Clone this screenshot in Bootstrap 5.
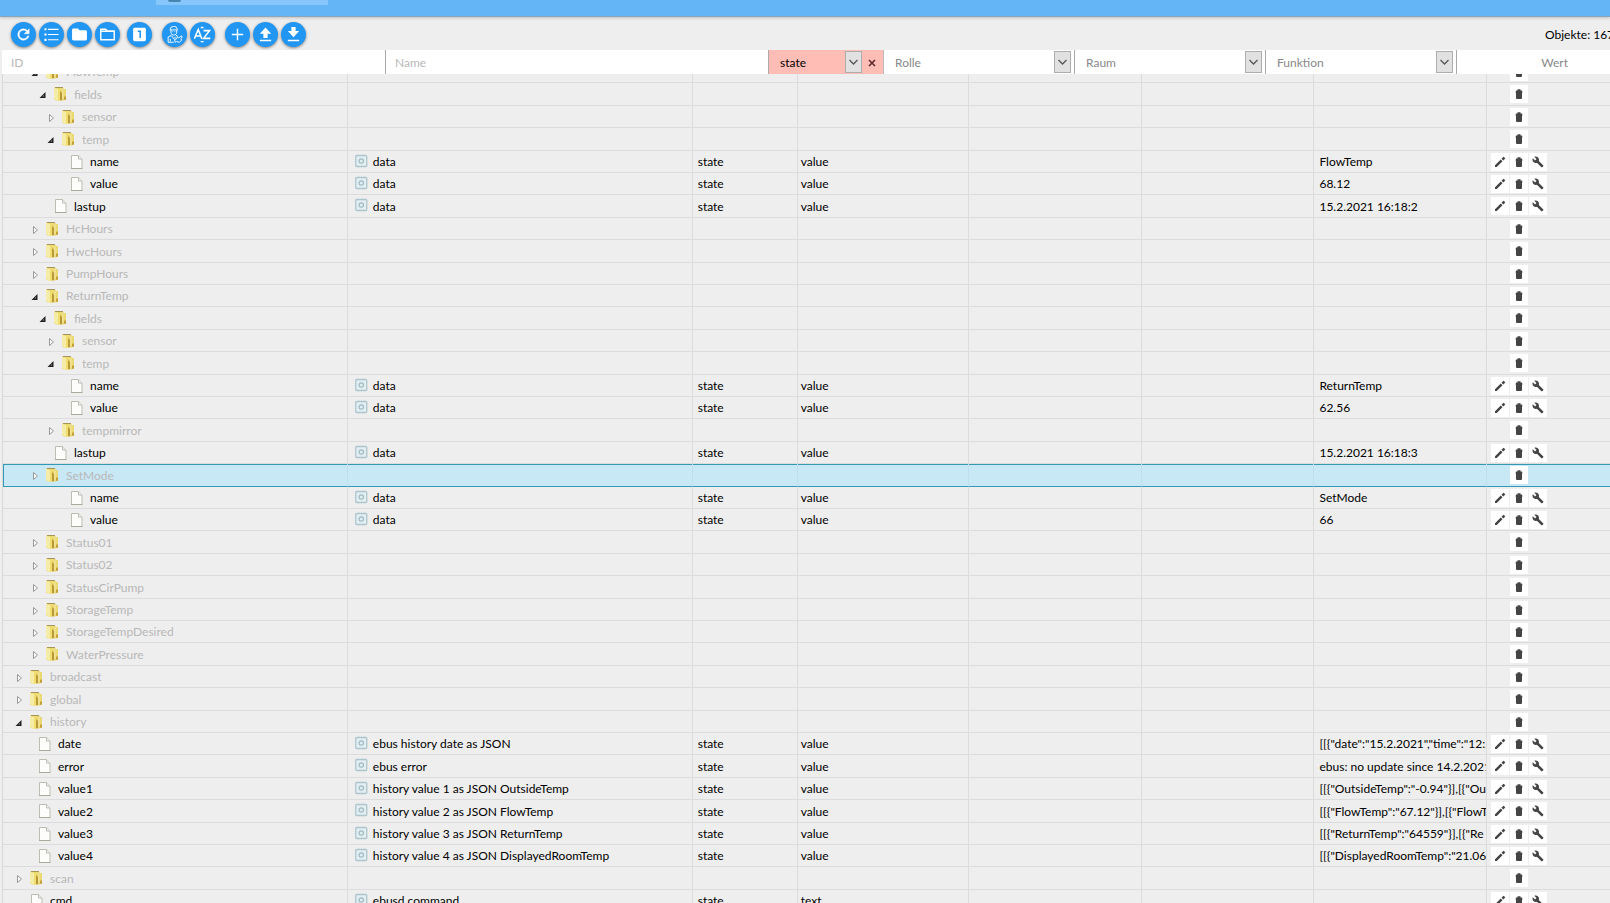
<!DOCTYPE html>
<html lang="de">
<head>
<meta charset="utf-8">
<meta name="viewport" content="width=device-width, initial-scale=1">
<title>Objekte</title>
<link href="https://cdn.jsdelivr.net/npm/bootstrap@5.3.0/dist/css/bootstrap.min.css" rel="stylesheet">
<style>
  body { background: #eee; color: #000; font: 12px/18px Lato, "Open Sans", sans-serif; }
  .appbar { height: 17px; background: #64b5f6; border-bottom: 1px solid #8aa4b8; box-shadow: 0 1px 3px #0003; }
  .appbar-tab { width: 172px; height: 5px; margin-left: 156px; padding-left: 12px; background: #86c6fa; }
  .appbar-dot { width: 13px; height: 2px; background: #4784b0; border-radius: 0 0 6px 6px; }
  .tools { height: 33px; padding: 5px 0 0 11px; gap: 3px; }
  .tool { width: 25px; height: 25px; border: 0; border-radius: 50%; background: #2196f3; box-shadow: 0 1px 3px #0007; }
  .tool svg { width: 17px; height: 17px; }
  .tool.apart { margin-left: 4px; }
  .tool.far { margin-left: 7px; }
  .count { width: 65px; white-space: nowrap; }
  .filters { display: grid; grid-template-columns: 384fr 383fr 115fr 191fr 191fr 191fr 153fr; height: 24px; margin-left: 2px; background: #fff; color: #888; }
  .filters > * { border-right: 1px solid #aaa; min-width: 0; }
  .filters > :last-child { border: 0; }
  .filters input, .filters select { width: 100%; height: 24px; border: 0; padding: 2px 8px 0; background: transparent; color: inherit; outline: 0; appearance: none; }
  .filters input { padding: 0 9px; }
  .filters input::placeholder { color: #b8b8b8; opacity: 1; }
  .filters .chosen { background: #ffbdb5; color: #000; border-right: 1px solid #bbb; }
  .pick { display: grid; grid-template-columns: 1fr auto; align-items: center; }
  .pick select { grid-area: 1 / 1 / 2 / 3; padding-left: 11px; }
  .drop { grid-area: 1 / 2; width: 17px; height: 22px; margin-right: 3px; background: #e1e1e1; border: 1px solid #adadad; pointer-events: none; }
  .pick .clear { width: 21px; border: 0; padding: 0 2px 0 0; background: none; grid-area: 1 / 3; line-height: 1; }
  .chosen .drop { margin-right: 0; }
  .chosen.pick { grid-template-columns: 1fr auto auto; }
  .value-head { padding: 2px 42px 0 0; }
  .tree { table-layout: fixed; width: calc(100% - 2px); margin: -13px 0 0 2px; border-collapse: separate; border-spacing: 0; border-left: 1px solid #d8d8d8; }
  .tree td { height: 22px; padding: 0 0 0 5px; border: solid #dcdcdc; border-width: 0 1px 1px 0; overflow: hidden; white-space: nowrap; line-height: 18px; }
  .tree tr:nth-child(5n+2) td, .tree tr:nth-child(5n+4) td { height: 23px; }
  .tree td:last-child { border-right: 0; padding-left: 4px; }
  .tree td:nth-child(2) { padding-left: 7px; }
  .tree td:nth-child(4) { padding-left: 3px; }
  .tree .cell-text { padding-top: 1px; }
  .branch { color: #b8b8b8; }
  .tree .active td { background: #c9e8f6; border-bottom-color: #3399b5; border-right-color: #c0dfed; box-shadow: inset 0 1px #3399b5; }
  .tree .active td:first-child { box-shadow: inset 1px 1px #3399b5; }
  .twig, .glyph { width: 20px; height: 18px; flex: none; }
  .kind { width: 18px; height: 18px; flex: none; }
  .acts { gap: 1px; }
  .act { width: 18px; height: 18px; border: 0; padding: 0; background: #fff; display: flex; align-items: center; justify-content: center; }
  .act svg { width: 12px; height: 12px; }
</style>
</head>
<body class="overflow-hidden">
<svg class="d-none" aria-hidden="true">
  <symbol id="i-folder" viewBox="1 0 20 18"><path d="M1 2.500h9l1 1.500h2v10.500l-2.500 1H3l-2-1z" fill="#ead873"/><path d="M1 3l4 1v12l-4-2z" fill="#f6ecaa"/><path d="M5 4l2-1v12l-2 1z" fill="#f0dd6c"/><path d="M7 6l2 2v7l-2 .5z" fill="#b8993c"/><path d="M9 4h2v9l-2 1z" fill="#f0e08a"/><path d="M11 11.500h2v3l-2 .5z" fill="#c4a136"/><path d="M2 2.500h8" stroke="#a8955c"/></symbol>
  <symbol id="i-file" viewBox="0 0 20 18"><path d="M1.500 2.500h7l3.500 3.500v9.500H1.500z" fill="#fdfdfb" stroke="#bdbdb4"/><path d="M8.500 2.500V6H12" fill="#eee" stroke="#bdbdb4"/><path d="M1 15.500h11.500" stroke="#aaa99a"/></symbol>
  <symbol id="i-open" viewBox="0 0 20 18"><path d="M11.500 7v6H5.500z" fill="#222"/><path d="M10 10v1.500H8.500z" fill="#999"/></symbol>
  <symbol id="i-shut" viewBox="0 0 20 18"><path d="M7.500 6.500l4 3.500-4 3.500z" fill="#fafafa" stroke="#999"/></symbol>
  <symbol id="i-state" viewBox="0 0 18 18"><rect x=".75" y="2.500" width="11" height="11" rx="1" fill="#e4edf0" stroke="#adc6ce" stroke-width="1.300"/><circle cx="6.250" cy="8" r="2.200" fill="none" stroke="#9dbbc5" stroke-width="1.200"/></symbol>
  <symbol id="i-pen" viewBox="0 0 24 24"><path d="M2 18.500V22h3.500L17 10.500 13.500 7zM22 5.500a1 1 0 0 0 0-1.400L19.900 2a1 1 0 0 0-1.400 0L15 5.500 18.500 9z" fill="#444"/></symbol>
  <symbol id="i-bin" viewBox="0 0 24 24"><path d="M6 5h3V2.500h6V5h3v2h1v2h-1v11a2 2 0 0 1-2 2H8a2 2 0 0 1-2-2V9H5V7h1z" fill="#444"/></symbol>
  <symbol id="i-wrench" viewBox="0 0 24 24"><path d="M22.700 19l-9.100-9.100c.9-2.300.4-5-1.500-6.900-2-2-5-2.400-7.400-1.300L9 6 6 9 1.600 4.700C.4 7.100.9 10.100 2.900 12.100c1.900 1.900 4.600 2.400 6.900 1.500l9.100 9.100c.4.4 1 .4 1.400 0l2.300-2.300c.5-.4.5-1.100.1-1.400z" fill="#444"/></symbol>
  <symbol id="i-chev" viewBox="0 0 15 20"><path d="M3.500 8l4 4 4-4" fill="none" stroke="#555" stroke-width="1.300"/></symbol>
</svg>

<div class="d-flex flex-column vh-100">
  <header class="appbar flex-shrink-0"><div class="appbar-tab"><div class="appbar-dot"></div></div></header>

  <div class="tools d-flex align-items-start flex-shrink-0">
    <button class="tool d-flex p-0 align-items-center justify-content-center" aria-label="Aktualisieren"><svg viewBox="0 0 24 24" fill="#fff" stroke="#fff" stroke-width=".6"><path d="M17.650 6.350A8 8 0 1 0 19.730 14h-2.080A6 6 0 1 1 12 6c1.660 0 3.140.69 4.220 1.780L13 11h7V4z"/></svg></button>
    <button class="tool d-flex p-0 align-items-center justify-content-center" aria-label="Liste"><svg viewBox="0 0 24 24" fill="#fff"><path d="M2 3h3v3H2zM2 10.500h3v3H2zM2 18h3v3H2zM7 4h15v1.500H7zM7 11.300h15v1.500H7zM7 18.700h15v1.500H7z"/></svg></button>
    <button class="tool d-flex p-0 align-items-center justify-content-center" aria-label="Alle zuklappen"><svg viewBox="0 0 24 24" fill="#fff"><path d="M10 3.500H3.500a2 2 0 0 0-2 2v13a2 2 0 0 0 2 2h17a2 2 0 0 0 2-2V8a2 2 0 0 0-2-2H12z"/></svg></button>
    <button class="tool d-flex p-0 align-items-center justify-content-center" aria-label="Alle aufklappen"><svg viewBox="0 0 24 24" fill="none" stroke="#fff" stroke-width="2"><path d="M2.500 19.500v-15h7l2 2.500h10v12.500zM2.500 7.500h19"/></svg></button>
    <button class="tool apart d-flex p-0 align-items-center justify-content-center" aria-label="Eine Ebene"><svg viewBox="0 0 24 24"><rect x="3" y="2.500" width="18" height="19" rx="2" fill="#fff"/><path d="M9.500 7.500h3.500v9.500" fill="none" stroke="#2196f3" stroke-width="2.200"/></svg></button>
    <button class="tool far d-flex p-0 align-items-center justify-content-center" aria-label="Expertenmodus"><svg viewBox="0 0 24 24" fill="none" stroke="#fff" stroke-width="1.300"><path d="M6 5a5 4.500 0 0 1 10 0M5 5.500h12M7 6v3c0 5 8 5 8 0V6M9 8h1M12 8h1M8 13l-5 2.500V23h8M14 13l2 1M8 14l3 4 3-3M6 18v4M13 23l-1-4 3-1 1-3 2 2 3-3 2 1-2 3 1 2-3 3-4-1z"/></svg></button>
    <button class="tool d-flex p-0 align-items-center justify-content-center" aria-label="Sortieren"><svg viewBox="0 0 24 24" fill="none" stroke="#fff" stroke-width="2.200"><path d="M.5 18L6 5l5 13M2.500 14h7M13.500 6.500H22L13.500 17.500H23"/><path d="M8.500 3l3-2.500 3 2.500zM8.500 21l3 2.500 3-2.500z" fill="#fff" stroke="none"/></svg></button>
    <button class="tool far d-flex p-0 align-items-center justify-content-center" aria-label="Hinzufügen"><svg viewBox="0 0 24 24" fill="none" stroke="#fff" stroke-width="2"><path d="M12 4v16M4 12h16"/></svg></button>
    <button class="tool d-flex p-0 align-items-center justify-content-center" aria-label="Hochladen"><svg viewBox="0 0 24 24" fill="#fff"><path d="M12 2L4 11h5v6h6v-6h5zM4 19.500h16v2H4z"/></svg></button>
    <button class="tool d-flex p-0 align-items-center justify-content-center" aria-label="Herunterladen"><svg viewBox="0 0 24 24" fill="#fff"><path d="M12 16l8-9h-5V1.500H9V7H4zM4 19.500h16v2H4z"/></svg></button>
    <div class="count ms-auto pt-1">Objekte: 167</div>
  </div>

  <div class="filters flex-shrink-0">
    <div><input type="text" placeholder="ID" aria-label="ID"></div>
    <div><input type="text" placeholder="Name" aria-label="Name"></div>
    <div class="pick chosen"><select aria-label="Typ"><option>state</option></select><svg class="drop"><use href="#i-chev"/></svg><button class="clear" aria-label="Filter löschen"><svg width="8" height="8" viewBox="0 0 8 8"><path d="M1 1l6 6M7 1L1 7" stroke="#5a2a2a" stroke-width="1.600"/></svg></button></div>
    <div class="pick"><select aria-label="Rolle"><option>Rolle</option></select><svg class="drop"><use href="#i-chev"/></svg></div>
    <div class="pick"><select aria-label="Raum"><option>Raum</option></select><svg class="drop"><use href="#i-chev"/></svg></div>
    <div class="pick"><select aria-label="Funktion"><option>Funktion</option></select><svg class="drop"><use href="#i-chev"/></svg></div>
    <div class="value-head d-flex align-items-center justify-content-end"><span>Wert</span></div>
  </div>

  <main class="flex-fill overflow-hidden">
    <table class="tree">
      <colgroup>
        <col style="width:21.46%"><col style="width:21.46%"><col style="width:6.53%"><col style="width:10.64%"><col style="width:10.76%"><col style="width:10.76%"><col style="width:10.76%"><col>
      </colgroup>
      <tbody id="rows"></tbody>
    </table>
  </main>
</div>

<script>
  // Branches: [level, id, "open" | "shut"]; leaves: [level, id, "leaf", name, value, role]
  const objects = [
    [2, "FlowTemp", "open"], [3, "fields", "open"], [4, "sensor", "shut"], [4, "temp", "open"],
    [5, "name", "leaf", "data", "FlowTemp"], [5, "value", "leaf", "data", "68.12"],
    [3, "lastup", "leaf", "data", "15.2.2021 16:18:2"],
    [2, "HcHours", "shut"], [2, "HwcHours", "shut"], [2, "PumpHours", "shut"],
    [2, "ReturnTemp", "open"], [3, "fields", "open"], [4, "sensor", "shut"], [4, "temp", "open"],
    [5, "name", "leaf", "data", "ReturnTemp"], [5, "value", "leaf", "data", "62.56"],
    [4, "tempmirror", "shut"], [3, "lastup", "leaf", "data", "15.2.2021 16:18:3"],
    [2, "SetMode", "shut"],
    [5, "name", "leaf", "data", "SetMode"], [5, "value", "leaf", "data", "66"],
    [2, "Status01", "shut"], [2, "Status02", "shut"], [2, "StatusCirPump", "shut"],
    [2, "StorageTemp", "shut"], [2, "StorageTempDesired", "shut"], [2, "WaterPressure", "shut"],
    [0, "broadcast", "shut"], [0, "global", "shut"], [0, "history", "open"],
    [1, "date", "leaf", "ebus history date as JSON", '[[{"date":"15.2.2021","time":"12:.'],
    [1, "error", "leaf", "ebus error", "ebus: no update since 14.2.2021"],
    [1, "value1", "leaf", "history value 1 as JSON OutsideTemp", '[[{"OutsideTemp":"-0.94"}],[{"Ou'],
    [1, "value2", "leaf", "history value 2 as JSON FlowTemp", '[[{"FlowTemp":"67.12"}],[{"FlowT'],
    [1, "value3", "leaf", "history value 3 as JSON ReturnTemp", '[[{"ReturnTemp":"64559"}],[{"Re'],
    [1, "value4", "leaf", "history value 4 as JSON DisplayedRoomTemp", '[[{"DisplayedRoomTemp":"21.06'],
    [0, "scan", "shut"], [0, "cmd", "leaf", "ebusd command", "", "text"]
  ];
  const icon = (name, cls) => `<svg class="${cls || ""}"><use href="#i-${name}"/></svg>`;
  const act = (name, label, cls) => `<button class="act ${cls || ""}" aria-label="${label}">${icon(name)}</button>`;
  const text = (s) => `<div class="cell-text">${s}</div>`;
  document.getElementById("rows").innerHTML = objects.map(([level, id, kind, name, value, role]) => {
    const leaf = kind === "leaf";
    return `<tr class="${leaf ? "" : "branch"} ${id === "SetMode" ? "active" : ""}">
      <td><div class="d-flex align-items-center" style="margin-left:${level * 8 + 2}px">${leaf ? '<span class="twig"></span>' : icon(kind, "twig")}${icon(leaf ? "file" : "folder", "glyph")}${text(id)}</div></td>
      <td>${leaf ? `<div class="d-flex align-items-center">${icon("state", "kind")}${text(name)}</div>` : ""}</td>
      <td>${leaf ? text("state") : ""}</td><td>${leaf ? text(role || "value") : ""}</td><td></td><td></td>
      <td>${leaf ? text(value) : ""}</td>
      <td><div class="acts d-flex">${act("pen", "Bearbeiten", leaf ? "" : "invisible")}${act("bin", "Löschen")}${leaf ? act("wrench", "Einstellungen") : ""}</div></td></tr>`;
  }).join("");
</script>
<script src="https://cdn.jsdelivr.net/npm/bootstrap@5.3.0/dist/js/bootstrap.bundle.min.js"></script>
</body>
</html>
